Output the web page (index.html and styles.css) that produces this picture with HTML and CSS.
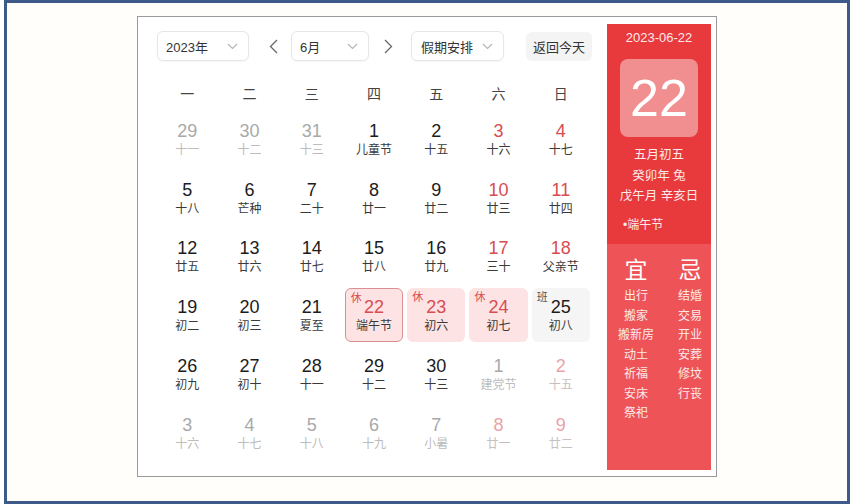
FILE: index.html
```html
<!DOCTYPE html>
<html lang="zh">
<head>
<meta charset="utf-8">
<title>日历</title>
<link rel="stylesheet" href="styles.css">
</head>
<body>
<div class="frame">
  <div class="cal">
    <div class="main">
      <div class="head">
        <div class="sel sel-year"><span>2023年</span><svg class="chev" width="11" height="7" viewBox="0 0 11 7"><path d="M1 1l4.5 4.5L10 1" fill="none" stroke="#b5b5b5" stroke-width="1.2"/></svg></div>
        <div class="arrow arrow-l"><svg width="9" height="15" viewBox="0 0 9 15"><path d="M8 1L1.5 7.5 8 14" fill="none" stroke="#666" stroke-width="1.3"/></svg></div>
        <div class="sel sel-month"><span>6月</span><svg class="chev" width="11" height="7" viewBox="0 0 11 7"><path d="M1 1l4.5 4.5L10 1" fill="none" stroke="#b5b5b5" stroke-width="1.2"/></svg></div>
        <div class="arrow arrow-r"><svg width="9" height="15" viewBox="0 0 9 15"><path d="M1 1l6.5 6.5L1 14" fill="none" stroke="#666" stroke-width="1.3"/></svg></div>
        <div class="sel sel-hol"><span>假期安排</span><svg class="chev" width="11" height="7" viewBox="0 0 11 7"><path d="M1 1l4.5 4.5L10 1" fill="none" stroke="#b5b5b5" stroke-width="1.2"/></svg></div>
        <div class="today">返回今天</div>
      </div>
      <div class="weekdays">
        <span>一</span><span>二</span><span>三</span><span>四</span><span>五</span><span>六</span><span>日</span>
      </div>
      <div class="grid">
        <div class="d o"><div class="box"><b>29</b><i>十一</i></div></div>
        <div class="d o"><div class="box"><b>30</b><i>十二</i></div></div>
        <div class="d o"><div class="box"><b>31</b><i>十三</i></div></div>
        <div class="d"><div class="box"><b>1</b><i>儿童节</i></div></div>
        <div class="d"><div class="box"><b>2</b><i>十五</i></div></div>
        <div class="d w"><div class="box"><b>3</b><i>十六</i></div></div>
        <div class="d w"><div class="box"><b>4</b><i>十七</i></div></div>

        <div class="d"><div class="box"><b>5</b><i>十八</i></div></div>
        <div class="d"><div class="box"><b>6</b><i>芒种</i></div></div>
        <div class="d"><div class="box"><b>7</b><i>二十</i></div></div>
        <div class="d"><div class="box"><b>8</b><i>廿一</i></div></div>
        <div class="d"><div class="box"><b>9</b><i>廿二</i></div></div>
        <div class="d w"><div class="box"><b>10</b><i>廿三</i></div></div>
        <div class="d w"><div class="box"><b>11</b><i>廿四</i></div></div>

        <div class="d"><div class="box"><b>12</b><i>廿五</i></div></div>
        <div class="d"><div class="box"><b>13</b><i>廿六</i></div></div>
        <div class="d"><div class="box"><b>14</b><i>廿七</i></div></div>
        <div class="d"><div class="box"><b>15</b><i>廿八</i></div></div>
        <div class="d"><div class="box"><b>16</b><i>廿九</i></div></div>
        <div class="d w"><div class="box"><b>17</b><i>三十</i></div></div>
        <div class="d w"><div class="box"><b>18</b><i>父亲节</i></div></div>

        <div class="d"><div class="box"><b>19</b><i>初二</i></div></div>
        <div class="d"><div class="box"><b>20</b><i>初三</i></div></div>
        <div class="d"><div class="box"><b>21</b><i>夏至</i></div></div>
        <div class="d hol cur"><div class="box"><em class="tag">休</em><b>22</b><i>端午节</i></div></div>
        <div class="d hol"><div class="box"><em class="tag">休</em><b>23</b><i>初六</i></div></div>
        <div class="d hol"><div class="box"><em class="tag">休</em><b>24</b><i>初七</i></div></div>
        <div class="d work"><div class="box"><em class="tag">班</em><b>25</b><i>初八</i></div></div>

        <div class="d"><div class="box"><b>26</b><i>初九</i></div></div>
        <div class="d"><div class="box"><b>27</b><i>初十</i></div></div>
        <div class="d"><div class="box"><b>28</b><i>十一</i></div></div>
        <div class="d"><div class="box"><b>29</b><i>十二</i></div></div>
        <div class="d"><div class="box"><b>30</b><i>十三</i></div></div>
        <div class="d o"><div class="box"><b>1</b><i>建党节</i></div></div>
        <div class="d o w"><div class="box"><b>2</b><i>十五</i></div></div>

        <div class="d o"><div class="box"><b>3</b><i>十六</i></div></div>
        <div class="d o"><div class="box"><b>4</b><i>十七</i></div></div>
        <div class="d o"><div class="box"><b>5</b><i>十八</i></div></div>
        <div class="d o"><div class="box"><b>6</b><i>十九</i></div></div>
        <div class="d o"><div class="box"><b>7</b><i>小暑</i></div></div>
        <div class="d o w"><div class="box"><b>8</b><i>廿一</i></div></div>
        <div class="d o w"><div class="box"><b>9</b><i>廿二</i></div></div>
      </div>
    </div>
    <div class="panel">
      <div class="panel-top">
        <div class="p-date">2023-06-22</div>
        <div class="p-big">22</div>
        <div class="p-lunar">
          <div>五月初五</div>
          <div>癸卯年 兔</div>
          <div>戊午月 辛亥日</div>
        </div>
        <div class="p-fest">•端午节</div>
      </div>
      <div class="panel-bottom">
        <div class="yj">
          <div class="yj-col">
            <div class="yj-h">宜</div>
            <div>出行</div><div>搬家</div><div>搬新房</div><div>动土</div><div>祈福</div><div>安床</div><div>祭祀</div>
          </div>
          <div class="yj-col">
            <div class="yj-h">忌</div>
            <div>结婚</div><div>交易</div><div>开业</div><div>安葬</div><div>修坟</div><div>行丧</div>
          </div>
        </div>
      </div>
    </div>
  </div>
</div>
</body>
</html>
```
FILE: styles.css
```css
html, body {
  margin: 0;
  padding: 0;
  background: #ffffff;
}
body {
  width: 850px;
  height: 504px;
  overflow: hidden;
  font-family: "Liberation Sans", "Noto Sans CJK SC", sans-serif;
}
.frame {
  box-sizing: border-box;
  margin-left: 4px;
  width: 846px;
  height: 504px;
  border: 3px solid #3d5b88;
  background: #fffefb;
  padding: 13px 0 0 130px;
}
.cal {
  box-sizing: border-box;
  width: 580px;
  height: 461px;
  border: 1px solid #9a9a9a;
  background: #ffffff;
  display: flex;
}
.main {
  width: 469px;
  flex: none;
  padding-top: 14px;
}
.head {
  display: flex;
  align-items: center;
  height: 30px;
  padding-left: 19px;
}
.sel {
  box-sizing: border-box;
  height: 30px;
  border: 1px solid #e6e6e6;
  border-radius: 6px;
  display: flex;
  align-items: center;
  justify-content: space-between;
  padding: 0 10px 0 8px;
  font-size: 13px;
  color: #333;
  box-shadow: 0 1px 2px rgba(0,0,0,0.04);
}
.sel-year { width: 92px; }
.sel-month { width: 78px; }
.sel-hol { width: 93px; padding-left: 9px; }
.arrow {
  width: 22px;
  height: 30px;
  display: flex;
  align-items: center;
  justify-content: center;
}
.arrow-l { margin: 0 7px 0 13px; }
.arrow-r { margin: 0 12px 0 8px; }
.today {
  margin-left: 22px;
  width: 66px;
  height: 29px;
  border-radius: 6px;
  background: #f4f4f4;
  font-size: 13px;
  color: #333;
  display: flex;
  align-items: center;
  justify-content: center;
}
.weekdays {
  margin: 21px 0 3px 18px;
  width: 436px;
  display: grid;
  grid-template-columns: repeat(7, 1fr);
  line-height: 24px;
  font-size: 14px;
  color: #444;
  text-align: center;
}
.grid {
  margin-left: 18px;
  width: 436px;
  display: grid;
  grid-template-columns: repeat(7, 1fr);
  grid-auto-rows: 58.8px;
}
.d {
  display: flex;
  padding: 2.5px 2px;
  box-sizing: border-box;
}
.box {
  position: relative;
  flex: 1;
  border-radius: 6px;
  display: flex;
  flex-direction: column;
  align-items: center;
  justify-content: center;
  box-sizing: border-box;
  padding-top: 2px;
}
.box b {
  font-weight: normal;
  font-size: 18px;
  line-height: 22px;
  color: #1c1c1c;
}
.box i {
  font-style: normal;
  font-size: 12px;
  line-height: 17px;
  color: #3a3a3a;
}
.w .box b { color: #d84d51; }
.o .box b { color: #a9a9a9; }
.o .box i { color: #bcbcbc; }
.o.w .box b { color: #eaa3a5; }
.o.w .box i { color: #c8c0c0; }
.hol .box { background: #fde3e4; }
.hol .box b { color: #d84d51; }
.cur .box { border: 1.5px solid #dc8e90; }
.work .box { background: #f5f5f5; }
.tag {
  position: absolute;
  left: 5px;
  top: 3px;
  font-style: normal;
  font-size: 11px;
  line-height: 13px;
  color: #d84d51;
}
.work .tag { color: #555; }
.panel {
  width: 104px;
  height: 446px;
  margin-top: 7px;
  flex: none;
  display: flex;
  flex-direction: column;
  color: #fff;
}
.panel-top {
  height: 220px;
  background: #e8393d;
  display: flex;
  flex-direction: column;
  align-items: center;
}
.p-date {
  margin-top: 6px;
  font-size: 13px;
  line-height: 16px;
  color: #fde9e9;
}
.p-big {
  margin-top: 13px;
  width: 78px;
  height: 78px;
  border-radius: 8px;
  background: #f18e90;
  font-size: 52px;
  line-height: 78px;
  text-align: center;
  color: #ffffff;
}
.p-lunar {
  margin-top: 8px;
  font-size: 12.5px;
  line-height: 20.5px;
  text-align: center;
  color: #fde9e9;
}
.p-fest {
  align-self: flex-start;
  margin: 10px 0 0 16px;
  font-size: 12px;
  line-height: 16px;
  color: #fde9e9;
}
.panel-bottom {
  flex: 1;
  background: #ee5457;
}
.yj {
  display: grid;
  grid-template-columns: 54px 54px;
  margin-left: 2px;
  padding-top: 12px;
}
.yj-col {
  display: flex;
  flex-direction: column;
  align-items: center;
  font-size: 12px;
  line-height: 19.5px;
  color: #fde9e9;
}
.yj-h {
  font-size: 23px;
  line-height: 28px;
  margin-bottom: 3px;
  color: #fff;
}
```
